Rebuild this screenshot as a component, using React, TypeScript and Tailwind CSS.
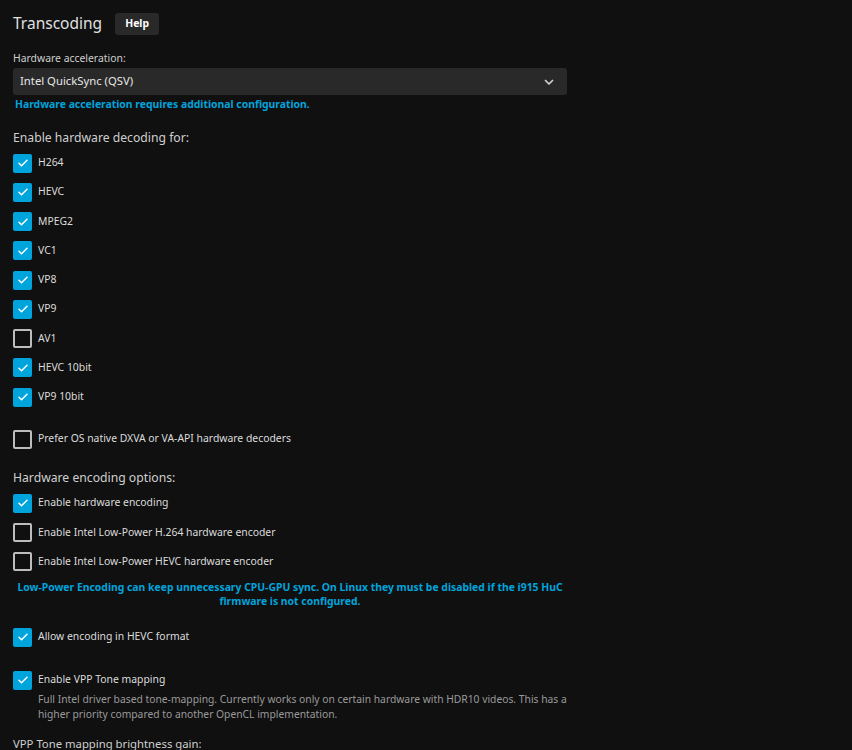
import React from "react";

const Check = ({ checked }: { checked: boolean }) =>
  checked ? (
    <span className="w-[19px] h-[19px] rounded-[2px] bg-[#00a4dc] flex items-center justify-center shrink-0">
      <svg width="12" height="12" viewBox="0 0 24 24" fill="none" stroke="#fff" strokeWidth="3" strokeLinecap="round" strokeLinejoin="round">
        <path d="M4 12.5l5 5L20 6.5" />
      </svg>
    </span>
  ) : (
    <span className="w-[19px] h-[19px] rounded-[2px] border-2 border-[#bdbdbd] shrink-0" />
  );

const Row = ({ label, checked }: { label: string; checked: boolean }) => (
  <div className="h-[29.25px] flex items-center gap-[6px]">
    <Check checked={checked} />
    <span className="text-[10.4px] text-[#dcdcdc]">{label}</span>
  </div>
);

const decoders: [string, boolean][] = [
  ["H264", true],
  ["HEVC", true],
  ["MPEG2", true],
  ["VC1", true],
  ["VP8", true],
  ["VP9", true],
  ["AV1", false],
  ["HEVC 10bit", true],
  ["VP9 10bit", true],
];

const App = () => {
  return (
    <div
      className="w-full h-[750px] overflow-hidden bg-[#101010] text-[#dcdcdc] pl-[13px] pt-[13px]"
      style={{ fontFamily: '"Noto Sans", sans-serif' }}
    >
      <div className="w-[554px] flex flex-col">
        <div className="h-[22px] flex items-center">
          <h2 className="text-[15.5px] text-[#e0e0e0] leading-none">Transcoding</h2>
          <button className="ml-[13px] h-[22px] w-[44px] rounded-[3px] bg-[#292929] text-[10.4px] font-bold text-white">
            Help
          </button>
        </div>

        <label className="mt-[15px] text-[10.4px] leading-[16px] text-[#cfcfcf]">Hardware acceleration:</label>
        <div className="mt-[2px] h-[27px] rounded-[3px] bg-[#292929] flex items-center justify-between pl-[7px] pr-[12px]">
          <span className="text-[11.3px] text-[#e6e6e6]">Intel QuickSync (QSV)</span>
          <svg width="12" height="12" viewBox="0 0 24 24" fill="none" stroke="#d0d0d0" strokeWidth="3.5" strokeLinecap="round" strokeLinejoin="round">
            <path d="M5 9l7 7 7-7" />
          </svg>
        </div>
        <p className="mt-[2px] pl-[2px] text-[10.4px] leading-[14px] font-bold text-[#00a4dc]">
          Hardware acceleration requires additional configuration.
        </p>

        <h3 className="mt-[18px] text-[12.2px] leading-[18px] text-[#cfcfcf]">Enable hardware decoding for:</h3>
        <div className="mt-[1.4px] flex flex-col">
          {decoders.map(([name, on]) => (
            <Row key={name} label={name} checked={on} />
          ))}
        </div>
        <div className="mt-[12.8px]">
          <Row label="Prefer OS native DXVA or VA-API hardware decoders" checked={false} />
        </div>

        <h3 className="mt-[15.4px] text-[12.2px] leading-[18px] text-[#cfcfcf]">Hardware encoding options:</h3>
        <div className="mt-[1.4px] flex flex-col">
          <Row label="Enable hardware encoding" checked />
          <Row label="Enable Intel Low-Power H.264 hardware encoder" checked={false} />
          <Row label="Enable Intel Low-Power HEVC hardware encoder" checked={false} />
        </div>
        <p className="mt-[3.9px] text-center text-[10.4px] leading-[14px] font-bold text-[#00a4dc]">
          Low-Power Encoding can keep unnecessary CPU-GPU sync. On Linux they must be disabled if the i915 HuC
          firmware is not configured.
        </p>

        <div className="mt-[14.4px]">
          <Row label="Allow encoding in HEVC format" checked />
        </div>

        <div className="mt-[13.8px]">
          <Row label="Enable VPP Tone mapping" checked />
          <p className="-mt-[3px] pl-[25px] -mr-[6px] text-[10.3px] leading-[15px] text-[#9a9a9a]">
            Full Intel driver based tone-mapping. Currently works only on certain hardware with HDR10 videos. This has a
            higher priority compared to another OpenCL implementation.
          </p>
        </div>

        <h3 className="mt-[13.5px] text-[11.3px] leading-[18px] text-[#cfcfcf]">VPP Tone mapping brightness gain:</h3>
      </div>
    </div>
  );
};

export default App;
